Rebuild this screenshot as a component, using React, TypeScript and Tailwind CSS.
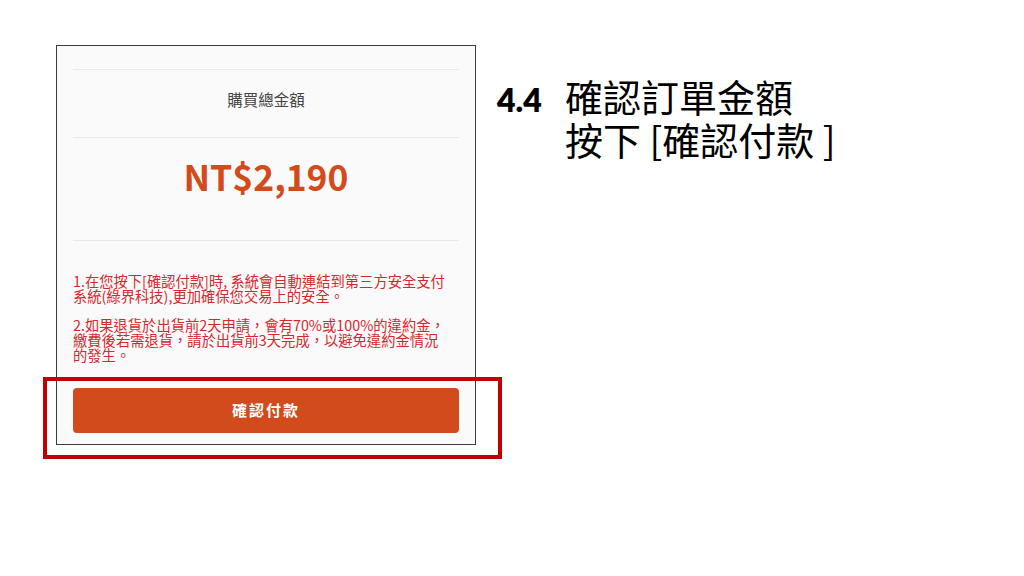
const cjk = { fontFamily: '"Noto Sans CJK TC", "Noto Sans", sans-serif' };

function Divider() {
  return <div className="h-px bg-[#e9e9e9]" />;
}

function PaymentCard() {
  return (
    <div className="relative w-[420px] h-[400px] shrink-0">
      <div
        className="flex flex-col h-full border-[1.5px] border-[#3c3c3c] bg-[#fafafa] px-[16px] pb-[11px]"
        style={cjk}
      >
        <div className="mt-[23px]">
          <Divider />
        </div>
        <div className="h-[67px] flex items-center justify-center pb-[8px] text-[15.5px] text-[#444]">
          購買總金額
        </div>
        <Divider />
        <div className="h-[102px] pt-[20px] text-center text-[35.5px] leading-none font-bold text-[#d34a1b]">
          NT$2,190
        </div>
        <Divider />
        <div className="pt-[32px] text-[14.3px] leading-[15px] text-[#d8262c] space-y-[14px] whitespace-nowrap">
          <p>
            1.在您按下[確認付款]時, 系統會自動連結到第三方安全支付
            <br />
            系統(綠界科技),更加確保您交易上的安全。
          </p>
          <p>
            2.如果退貨於出貨前2天申請，會有70%或100%的違約金，
            <br />
            繳費後若需退貨，請於出貨前3天完成，以避免違約金情況
            <br />
            的發生。
          </p>
        </div>
        <button className="mt-auto h-[45px] w-full rounded-[4px] bg-[#d14b1d] text-white text-[15px] font-bold tracking-[2px]">
          確認付款
        </button>
      </div>
      <div className="absolute left-[-13px] top-[332px] w-[459px] h-[82px] border-4 border-[#c00000]" />
    </div>
  );
}

export default function App() {
  return (
    <div className="w-[1024px] h-[576px] bg-white flex pl-[56px] pt-[45px] gap-[21px] overflow-hidden">
      <PaymentCard />
      <div className="mt-[29px] flex items-baseline text-black">
        <div
          className="w-[68px] shrink-0 text-[32px] font-extrabold"
          style={{ fontFamily: 'Lato, "Liberation Sans", sans-serif' }}
        >
          4.4
        </div>
        <div className="text-[38px] leading-[43px]" style={cjk}>
          <div>確認訂單金額</div>
          <div>按下 [確認付款 ]</div>
        </div>
      </div>
    </div>
  );
}
